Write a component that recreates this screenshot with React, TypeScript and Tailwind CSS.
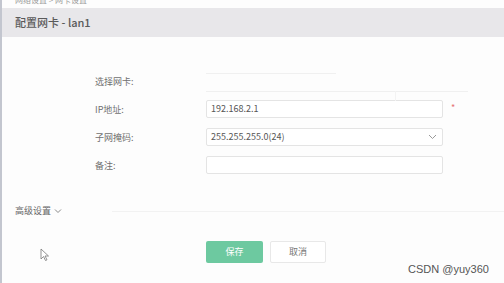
import React from "react";

const cjk = { fontFamily: '"Noto Sans CJK SC", "Noto Sans", sans-serif' };

function Row({ label, children, mark }: { label: string; children?: React.ReactNode; mark?: boolean }) {
  return (
    <div className="flex items-center h-[18px]">
      <div className="w-[111px] text-[9px] text-[#707070] leading-none">{label}</div>
      <div className="w-[237px] h-[18px]">{children}</div>
      {mark && <div className="ml-[8px] text-[9px] text-[#e57373] leading-none -mt-[4px]">*</div>}
    </div>
  );
}

export default function App() {
  return (
    <div className="w-[504px] h-[283px] bg-white flex overflow-hidden relative" style={cjk}>
      <div className="w-[2px] h-full bg-[#c3c6cf]" />
      <div className="flex-1 flex flex-col bg-[#fdfdfd]">
        <div className="h-[8px] relative overflow-hidden">
          <div className="absolute left-[13px] -top-[5px] text-[8px] leading-[10px] text-[#9a9a9a] whitespace-nowrap">网络设置 &gt; 网卡设置</div>
        </div>
        <div className="h-[29px] bg-[#e8e7ea] flex items-center pl-[13px] text-[11px] text-[#5a5a5a] font-medium">
          配置网卡 - lan1
        </div>
        <div className="flex flex-col pl-[93px] pt-[35px] gap-[10px]">
          <div className="flex items-center h-[18px] relative">
            <div className="w-[111px] text-[9px] text-[#707070] leading-none">选择网卡:</div>
            <div className="absolute left-[111px] top-[1px] w-[130px] h-px bg-[#f0f0f0]" />
            <div className="absolute left-[111px] top-[19px] w-[262px] h-px bg-[#f0f0f0]" />
            <div className="absolute left-[300px] top-[19px] w-px h-[10px] bg-[#f3f3f3]" />
          </div>
          <Row label="IP地址:" mark>
            <div className="w-full h-full border border-[#e4e4e4] rounded-[2px] bg-white flex items-center px-[4px] text-[9px] text-[#555]">
              192.168.2.1
            </div>
          </Row>
          <Row label="子网掩码:">
            <div className="w-full h-full border border-[#e4e4e4] rounded-[2px] bg-white flex items-center justify-between px-[4px] text-[9px] text-[#555]">
              <span>255.255.255.0(24)</span>
              <svg width="9" height="6" viewBox="0 0 9 6" className="mr-[1px]">
                <path d="M1 1 L4.5 4.5 L8 1" fill="none" stroke="#9a9a9a" strokeWidth="1" />
              </svg>
            </div>
          </Row>
          <Row label="备注:">
            <div className="w-full h-full border border-[#e4e4e4] rounded-[2px] bg-white" />
          </Row>
        </div>
        <div className="flex items-center pl-[13px] mt-[31px] h-[12px]">
          <span className="text-[9px] text-[#666]">高级设置</span>
          <svg width="8" height="6" viewBox="0 0 8 6" className="ml-[3px]">
            <path d="M1 1.5 L4 4.5 L7 1.5" fill="none" stroke="#8a8a8a" strokeWidth="1" />
          </svg>
          <div className="ml-[50px] flex-1 h-px bg-[#f2f2f2]" />
        </div>
        <div className="flex pl-[204px] mt-[24px] gap-[7px]">
          <div className="w-[57px] h-[22px] rounded-[2px] bg-[#6dc9a0] text-white text-[9px] flex items-center justify-center">保存</div>
          <div className="w-[56px] h-[22px] rounded-[2px] bg-white border border-[#e8e8e8] text-[#777] text-[9px] flex items-center justify-center">取消</div>
        </div>
      </div>
      <svg className="absolute left-[40px] top-[248px]" width="10" height="14" viewBox="0 0 10 14">
        <path d="M1 1 L1 11 L3.5 8.5 L5.5 12.5 L7 11.8 L5 8 L8.5 8 Z" fill="white" stroke="#777" strokeWidth="0.8" />
      </svg>
      <div className="absolute left-[408px] top-[261px] text-[11px] text-[#555] whitespace-nowrap" style={{ fontFamily: '"Liberation Sans", Arial, sans-serif' }}>
        CSDN @yuy360
      </div>
    </div>
  );
}
